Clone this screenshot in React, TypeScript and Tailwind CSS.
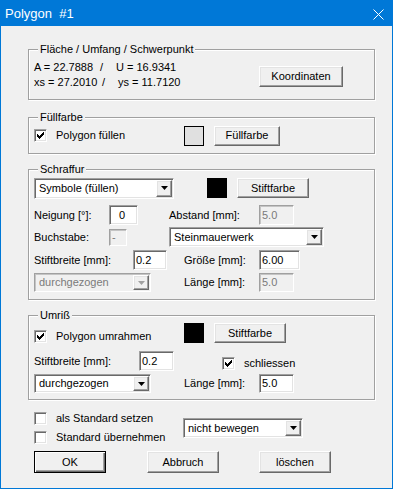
import type { ReactNode } from "react";

const sunken =
  "border border-t-[#a0a0a0] border-l-[#a0a0a0] border-r-white border-b-white shadow-[inset_1px_1px_0_#696969,inset_-1px_-1px_0_#e3e3e3]";
const sunkenOff =
  "border border-t-[#a0a0a0] border-l-[#a0a0a0] border-r-white border-b-white shadow-[inset_1px_1px_0_#c4c4c4,inset_-1px_-1px_0_#f0f0f0]";
const raised =
  "border border-t-white border-l-white border-r-[#696969] border-b-[#696969] shadow-[inset_-1px_-1px_0_#a0a0a0,inset_1px_1px_0_#e3e3e3]";

function Btn({ label, className }: { label: string; className: string }) {
  return (
    <div
      className={`flex shrink-0 items-center justify-center bg-[#f0f0f0] ${raised} ${className}`}
    >
      {label}
    </div>
  );
}

function Check({ checked }: { checked?: boolean }) {
  const cols = [2, 3, 4, 3, 2, 1, 0];
  return (
    <span className={`relative block h-[13px] w-[13px] shrink-0 bg-white ${sunken}`}>
      {checked ? (
        <svg className="absolute left-[2px] top-[2px]" width="7" height="7" viewBox="0 0 7 7">
          {cols.map((y, x) => (
            <rect key={x} x={x} y={y} width="1" height="3" fill="#000" />
          ))}
        </svg>
      ) : null}
    </span>
  );
}

function Combo({
  value,
  className,
  disabled,
}: {
  value: string;
  className: string;
  disabled?: boolean;
}) {
  return (
    <div
      className={`flex shrink-0 p-[1px] ${disabled ? `bg-[#f0f0f0] text-[#7a7a7a] ${sunkenOff}` : `bg-white ${sunken}`} ${className}`}
    >
      <span className="flex flex-1 items-center overflow-hidden whitespace-nowrap pl-[3px]">
        {value}
      </span>
      <span
        className={`flex w-[16px] shrink-0 items-center justify-center bg-[#f0f0f0] ${raised}`}
      >
        <svg width="7" height="4" viewBox="0 0 7 4">
          <path d="M0 0h7L3.5 4z" fill={disabled ? "#a0a0a0" : "#000"} />
        </svg>
      </span>
    </div>
  );
}

function Field({
  value,
  className,
  disabled,
}: {
  value: string;
  className: string;
  disabled?: boolean;
}) {
  return (
    <div
      className={`flex shrink-0 items-center ${disabled ? `bg-[#f0f0f0] text-[#7a7a7a] ${sunkenOff}` : `bg-white ${sunken}`} ${className}`}
    >
      {value}
    </div>
  );
}

function Swatch({ className }: { className: string }) {
  return <span className={`block h-[20px] w-[20px] shrink-0 border border-black ${className}`} />;
}

function Group({
  title,
  className,
  children,
}: {
  title: string;
  className: string;
  children: ReactNode;
}) {
  return (
    <div
      className={`relative w-[347px] border border-[#a0a0a0] pl-[5px] shadow-[inset_1px_1px_0_#fff,1px_1px_0_#fff] ${className}`}
    >
      <span className="absolute -top-[7px] left-[9px] bg-[#f0f0f0] px-[2px]">{title}</span>
      {children}
    </div>
  );
}

export default function App() {
  return (
    <div className="min-h-screen bg-white">
      <div className="flex h-[489px] w-[393px] flex-col border border-[#0078d7] bg-[#f0f0f0] font-['Liberation_Sans',Arial,sans-serif] text-[11px] leading-[13px] text-black">
        <div className="flex h-[25px] shrink-0 items-center justify-between bg-[#0078d7] pl-[4px] pr-[8px] text-white">
          <span className="whitespace-pre text-[13px] leading-[16px]">Polygon  #1</span>
          <svg className="mt-[1px]" width="11" height="11" viewBox="0 0 11 11">
            <path d="M0.5 0.5L10.5 10.5M10.5 0.5L0.5 10.5" stroke="#fff" strokeWidth="1" />
          </svg>
        </div>

        <div className="pl-[27px] pt-[23px]">
          <Group title="Fläche / Umfang / Schwerpunkt" className="h-[51px]">
            <div className="flex items-start">
              <div className="w-[225px] pt-[10px] leading-[15px]">
                <div className="whitespace-nowrap">
                  <span className="inline-block w-[66px]">A = 22.7888</span>
                  <span className="inline-block w-[16px]">/</span>
                  <span>U = 16.9341</span>
                </div>
                <div className="whitespace-nowrap">
                  <span className="inline-block w-[68px]">xs = 27.2010</span>
                  <span className="inline-block w-[16px]">/</span>
                  <span>ys = 11.7120</span>
                </div>
              </div>
              <Btn label="Koordinaten" className="mt-[16px] h-[21px] w-[84px]" />
            </div>
          </Group>

          <Group title="Füllfarbe" className="mt-[17px] h-[37px]">
            <div className="flex h-[21px] items-center pt-[7px] box-content">
              <div className="flex w-[150px] items-center">
                <Check checked />
                <span className="ml-[9px]">Polygon füllen</span>
              </div>
              <Swatch className="bg-[#e0e0e0]" />
              <Btn label="Füllfarbe" className="ml-[10px] h-[20px] w-[66px]" />
            </div>
          </Group>

          <Group title="Schraffur" className="mt-[15px] h-[131px] pt-[7px]">
            <div className="flex h-[22px] items-center">
              <Combo value="Symbole (füllen)" className="h-[21px] w-[140px]" />
              <Swatch className="ml-[33px] bg-black" />
              <Btn label="Stiftfarbe" className="ml-[10px] h-[20px] w-[72px]" />
            </div>
            <div className="mt-[6px] flex h-[20px] items-center">
              <span className="w-[75px] shrink-0">Neigung [°]:</span>
              <Field value="0" className="h-[20px] w-[29px] pl-[9px]" />
              <span className="ml-[31px] w-[90px] shrink-0">Abstand [mm]:</span>
              <Field value="5.0" disabled className="h-[20px] w-[35px] pl-[2px]" />
            </div>
            <div className="mt-[2px] flex h-[20px] items-center">
              <span className="w-[75px] shrink-0">Buchstabe:</span>
              <Field value="-" disabled className="h-[17px] w-[18px] pl-[2px]" />
              <Combo value="Steinmauerwerk" className="ml-[42px] h-[20px] w-[155px]" />
            </div>
            <div className="mt-[3px] flex h-[20px] items-center">
              <span className="w-[99px] shrink-0">Stiftbreite [mm]:</span>
              <Field value="0.2" className="h-[20px] w-[34px] pl-[2px]" />
              <span className="ml-[17px] w-[75px] shrink-0">Größe [mm]:</span>
              <Field value="6.00" className="h-[20px] w-[41px] pl-[2px]" />
            </div>
            <div className="mt-[3px] flex h-[19px] items-center">
              <Combo value="durchgezogen" disabled className="h-[19px] w-[117px]" />
              <span className="ml-[33px] w-[75px] shrink-0">Länge [mm]:</span>
              <Field value="5.0" disabled className="h-[19px] w-[35px] pl-[2px]" />
            </div>
          </Group>

          <Group title="Umriß" className="mt-[15px] h-[85px] pt-[7px]">
            <div className="flex h-[20px] items-start">
              <div className="mt-[7px] flex h-[13px] w-[150px] items-center">
                <Check checked />
                <span className="ml-[9px]">Polygon umrahmen</span>
              </div>
              <Swatch className="bg-black" />
              <Btn label="Stiftfarbe" className="ml-[10px] h-[20px] w-[72px]" />
            </div>
            <div className="mt-[8px] flex h-[20px] items-start">
              <span className="flex h-[20px] w-[105px] shrink-0 items-center">Stiftbreite [mm]:</span>
              <Field value="0.2" className="h-[20px] w-[35px] pl-[2px]" />
              <div className="ml-[48px] mt-[6px] flex h-[13px] items-center">
                <Check checked />
                <span className="ml-[9px]">schliessen</span>
              </div>
            </div>
            <div className="mt-[3px] flex h-[19px] items-center">
              <Combo value="durchgezogen" className="h-[19px] w-[117px]" />
              <span className="ml-[33px] w-[75px] shrink-0">Länge [mm]:</span>
              <Field value="5.0" className="h-[19px] w-[35px] pl-[2px]" />
            </div>
          </Group>

          <div className="mt-[12px] pl-[6px]">
            <div className="flex items-start">
              <div className="w-[149px] shrink-0">
                <div className="flex h-[13px] items-center">
                  <Check />
                  <span className="ml-[9px]">als Standard setzen</span>
                </div>
                <div className="mt-[6px] flex h-[13px] items-center">
                  <Check />
                  <span className="ml-[9px]">Standard übernehmen</span>
                </div>
              </div>
              <Combo value="nicht bewegen" className="mt-[6px] h-[20px] w-[120px]" />
            </div>
            <div className="mt-[7px] flex">
              <div className="flex h-[22px] w-[72px] items-center justify-center border border-black bg-[#f0f0f0] shadow-[inset_1px_1px_0_#fff,inset_-1px_-1px_0_#696969,inset_-2px_-2px_0_#a0a0a0]">
                OK
              </div>
              <Btn label="Abbruch" className="ml-[41px] h-[22px] w-[72px]" />
              <Btn label="löschen" className="ml-[40px] h-[22px] w-[72px]" />
            </div>
          </div>
        </div>
      </div>
    </div>
  );
}
